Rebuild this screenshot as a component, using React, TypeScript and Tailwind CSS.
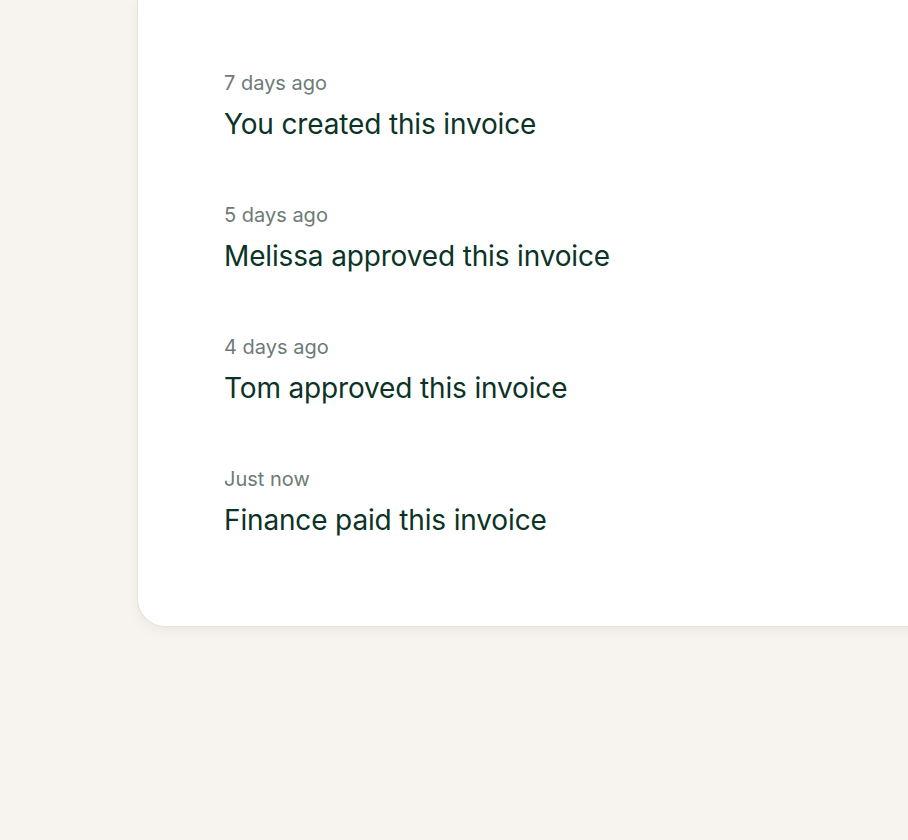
const events = [
  { when: '7 days ago', what: 'You created this invoice' },
  { when: '5 days ago', what: 'Melissa approved this invoice' },
  { when: '4 days ago', what: 'Tom approved this invoice' },
  { when: 'Just now', what: 'Finance paid this invoice' },
];

export default function App() {
  return (
    <div
      className="min-h-[840px] w-full overflow-hidden bg-[#f7f4ef] pl-[137px]"
      style={{ fontFamily: 'Inter, "Noto Sans", sans-serif' }}
    >
      {/* Activity card */}
      <div className="w-[800px] rounded-bl-[28px] border-b border-l border-[#e6e1d9] bg-white pb-[88px] pl-[86px] pt-[69px] shadow-[0_4px_12px_rgba(120,100,70,0.08)]">
        <ul className="flex flex-col gap-[59px]">
          {events.map((e) => (
            <li key={e.when}>
              <p className="text-[20px] leading-[28px] text-[#6d7b76]">{e.when}</p>
              <p className="mt-[9px] text-[28px] leading-[36px] tracking-[-0.15px] text-[#0b3326]">{e.what}</p>
            </li>
          ))}
        </ul>
      </div>
    </div>
  );
}
